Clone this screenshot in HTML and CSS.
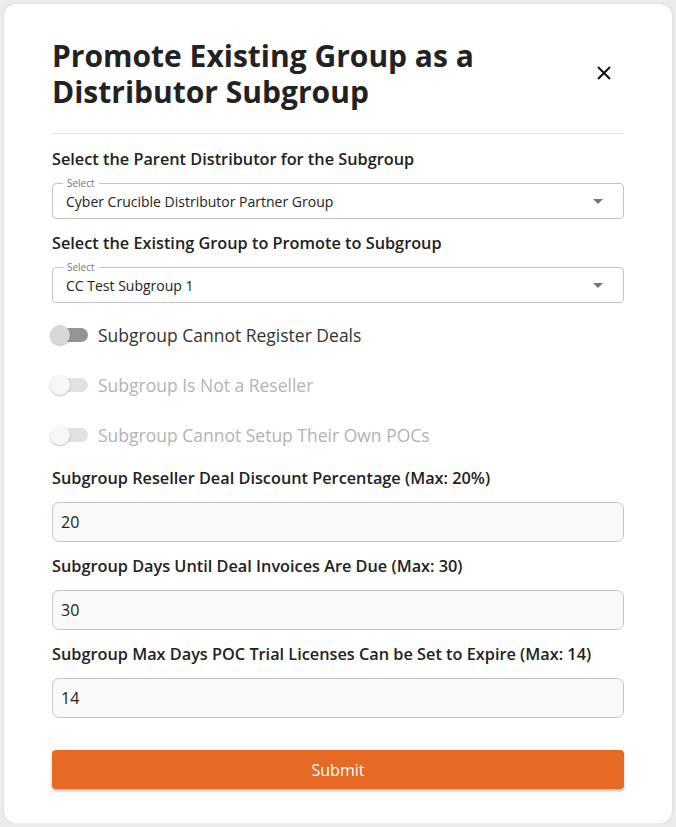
FILE: index.html
```html
<!DOCTYPE html>
<html>
<head>
    <title>Promote Subgroup</title>
    <link rel="stylesheet" href="styles.css">
</head>
<body>
    <div class="modal">
        <div class="modal-header">
            <h2 class="modal-title">Promote Existing Group as a Distributor Subgroup</h2>
            <button class="close-btn" type="button" aria-label="Close">
                <svg width="14" height="14" viewBox="0 0 14 14">
                    <path d="M1 1 L13 13 M13 1 L1 13" stroke="#111" stroke-width="2" fill="none"/>
                </svg>
            </button>
        </div>
        <hr class="divider">

        <form class="promote-form">
            <div class="field">
                <label class="field-label">Select the Parent Distributor for the Subgroup</label>
                <div class="select-box">
                    <span class="select-legend">Select</span>
                    <span class="select-value">Cyber Crucible Distributor Partner Group</span>
                    <span class="select-arrow"></span>
                </div>
            </div>

            <div class="field">
                <label class="field-label">Select the Existing Group to Promote to Subgroup</label>
                <div class="select-box">
                    <span class="select-legend">Select</span>
                    <span class="select-value">CC Test Subgroup 1</span>
                    <span class="select-arrow"></span>
                </div>
            </div>

            <div class="toggles">
                <div class="toggle-row">
                    <span class="switch"><span class="track"></span><span class="thumb"></span></span>
                    <span class="toggle-label">Subgroup Cannot Register Deals</span>
                </div>
                <div class="toggle-row disabled">
                    <span class="switch"><span class="track"></span><span class="thumb"></span></span>
                    <span class="toggle-label">Subgroup Is Not a Reseller</span>
                </div>
                <div class="toggle-row disabled">
                    <span class="switch"><span class="track"></span><span class="thumb"></span></span>
                    <span class="toggle-label">Subgroup Cannot Setup Their Own POCs</span>
                </div>
            </div>

            <div class="field">
                <label class="field-label">Subgroup Reseller Deal Discount Percentage (Max: 20%)</label>
                <input class="text-input" type="text" value="20">
            </div>

            <div class="field">
                <label class="field-label">Subgroup Days Until Deal Invoices Are Due (Max: 30)</label>
                <input class="text-input" type="text" value="30">
            </div>

            <div class="field">
                <label class="field-label">Subgroup Max Days POC Trial Licenses Can be Set to Expire (Max: 14)</label>
                <input class="text-input" type="text" value="14">
            </div>

            <button type="submit" class="submit-btn">Submit</button>
        </form>
    </div>
</body>
</html>
```

FILE: styles.css
```css
body {
    margin: 0;
    background-color: #ececec;
    font-family: "Open Sans", "Noto Sans", sans-serif;
    color: #222;
}

.modal {
    box-sizing: border-box;
    width: 668px;
    margin: 4px 0 0 4px;
    padding: 34px 48px 34px 48px;
    background: #fff;
    border-radius: 12px;
    box-shadow: 0 0 3px rgba(0, 0, 0, 0.12);
}

.modal-header {
    display: flex;
    align-items: center;
    justify-content: space-between;
}

.modal-title {
    margin: 0;
    width: 480px;
    font-size: 30px;
    line-height: 36px;
    font-weight: 700;
    color: #222;
}

.close-btn {
    background: none;
    border: none;
    padding: 0;
    margin: 0 13px 3px 0;
    width: 14px;
    height: 14px;
    display: flex;
}

.divider {
    border: none;
    border-top: 1px solid #e2e2e2;
    margin: 23px 0 13px 0;
}

.promote-form {
    display: flex;
    flex-direction: column;
}

.field {
    display: flex;
    flex-direction: column;
    gap: 12px;
    margin-bottom: 12px;
}

.field-label {
    font-size: 16.3px;
    line-height: 24px;
    font-weight: 600;
    color: #222;
}

/* outlined select with notched label */
.select-box {
    position: relative;
    box-sizing: border-box;
    height: 36px;
    border: 1px solid #c4c4c4;
    border-radius: 4px;
    display: flex;
    align-items: center;
    padding: 0 13px;
}

.select-legend {
    position: absolute;
    top: -7px;
    left: 10px;
    padding: 0 4px;
    background: #fff;
    font-size: 10px;
    line-height: 12px;
    color: #777;
}

.select-value {
    font-size: 14px;
    color: #222;
}

.select-arrow {
    margin-left: auto;
    margin-right: 7px;
    width: 0;
    height: 0;
    border-left: 5px solid transparent;
    border-right: 5px solid transparent;
    border-top: 5px solid #757575;
}

.toggles {
    display: flex;
    flex-direction: column;
    margin: -5px 0 6px 0;
}

.toggle-row {
    height: 50px;
    display: flex;
    align-items: center;
}

.switch {
    position: relative;
    width: 38px;
    height: 20px;
    margin-left: -2px;
}

.track {
    position: absolute;
    left: 4px;
    right: 0;
    top: 3px;
    height: 14px;
    border-radius: 7px;
    background: #959595;
}

.thumb {
    position: absolute;
    left: 0;
    top: 0;
    width: 20px;
    height: 20px;
    border-radius: 50%;
    background: #d8d8d8;
    box-shadow: 0 1px 2px rgba(0, 0, 0, 0.25);
}

.toggle-label {
    margin-left: 10px;
    font-size: 17.5px;
    color: #333;
}

.toggle-row.disabled .track {
    background: #e1e1e1;
}

.toggle-row.disabled .thumb {
    background: #f7f7f7;
}

.toggle-row.disabled .toggle-label {
    color: #b3b3b3;
}

.text-input {
    box-sizing: border-box;
    height: 40px;
    border: 1px solid #c6c6c6;
    border-radius: 7px;
    background: #f9f9f9;
    padding: 0 8px;
    font-family: "Open Sans", "Noto Sans", sans-serif;
    font-size: 16px;
    color: #222;
}

.submit-btn {
    margin-top: 20px;
    height: 39px;
    border: none;
    border-radius: 4px;
    background: #e66a24;
    color: #fff;
    font-family: "Open Sans", "Noto Sans", sans-serif;
    font-size: 16px;
    box-shadow: 0 2px 3px rgba(0, 0, 0, 0.28);
}
```
